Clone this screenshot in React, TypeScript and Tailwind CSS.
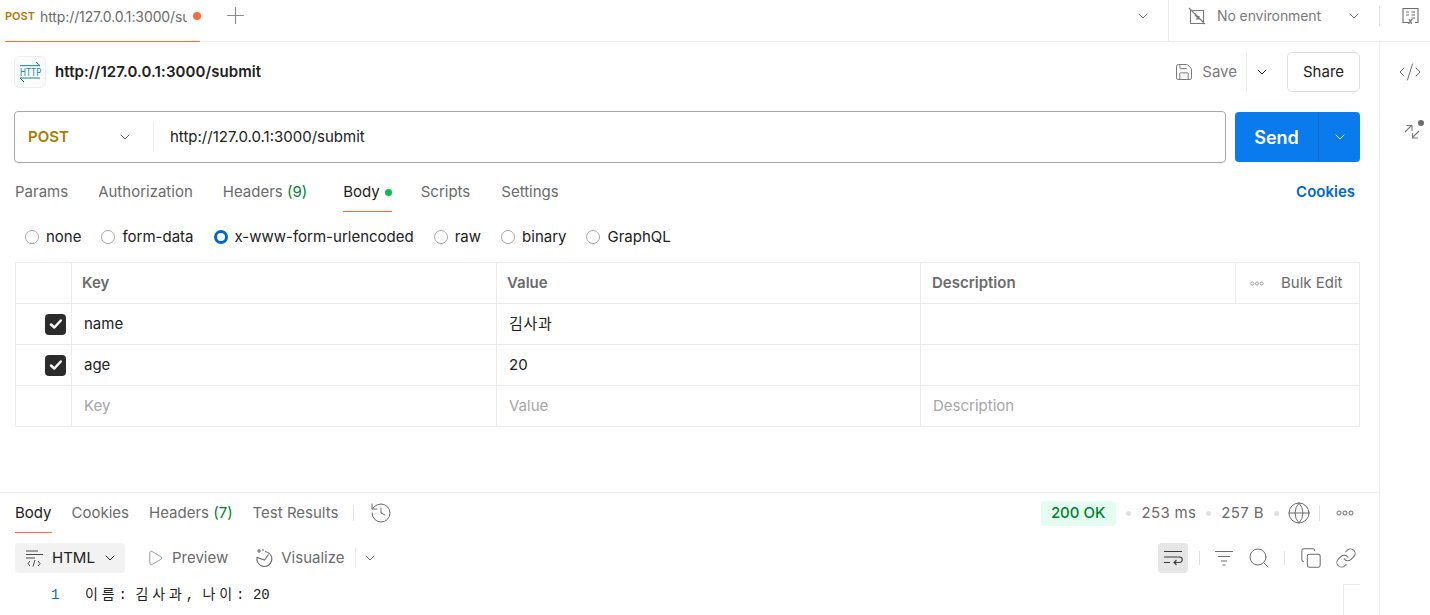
import { ChevronDown, CodeXml, Copy, Globe, History, Link, Play, Plus, Save, Search } from "lucide-react";

const RADIOS = ["none", "form-data", "x-www-form-urlencoded", "raw", "binary", "GraphQL"];

function Dots({ className }: { className?: string }) {
  return (
    <svg viewBox="0 0 18 6" className={className} fill="none" stroke="currentColor" strokeWidth="1">
      <circle cx="3" cy="3" r="2" />
      <circle cx="9" cy="3" r="2" />
      <circle cx="15" cy="3" r="2" />
    </svg>
  );
}

function HttpIcon() {
  return (
    <div className="w-8 h-8 rounded-md border border-[#ededed] bg-[#fbfbfb] flex items-center justify-center shrink-0">
      <svg viewBox="0 0 24 24" className="w-[24px] h-[24px]" fill="none" stroke="#0d8299" strokeWidth="1">
        <path d="M2 5.700h20M18 2l4 3.700" />
        <g transform="translate(2 16) scale(1 1.3)">
          <text x="0" y="0" fontSize="8" fill="#0d8299" stroke="none" fontFamily="Inter">HTTP</text>
        </g>
        <path d="M2 18h20M2 18l4 4" />
      </svg>
    </div>
  );
}

function Cell({ children, className }: { children?: React.ReactNode; className?: string }) {
  return <div className={"border-r border-b border-[#ededed] flex items-center " + (className ?? "")}>{children}</div>;
}

function Check() {
  return (
    <div className="w-[21px] h-[21px] rounded-[4px] bg-[#2b2b2b] flex items-center justify-center">
      <svg viewBox="0 0 16 16" className="w-4 h-4" fill="none" stroke="#fff" strokeWidth="2.500" strokeLinecap="round" strokeLinejoin="round">
        <path d="M3 8.500l3.300 3 6.500-7" />
      </svg>
    </div>
  );
}

function Row({ k, v, d, muted, check }: { k: string; v: React.ReactNode; d?: string; muted?: boolean; check?: boolean }) {
  const tone = muted ? "text-[#a6a6a6]" : "text-[#212121] pt-px";
  return (
    <div className="grid grid-cols-[56px_425px_424px_439px] h-[41px]">
      <Cell className="justify-end pr-[5px]">{check && <Check />}</Cell>
      <Cell className={"pl-3 " + tone}>{k}</Cell>
      <Cell className={"pl-3 " + tone}>{v}</Cell>
      <Cell className={"pl-3 " + tone}>{d}</Cell>
    </div>
  );
}

export default function App() {
  return (
    <div className="w-[1430px] h-[615px] overflow-hidden bg-white flex flex-col text-[15px] text-[#6b6b6b] font-['Inter','Noto_Sans_CJK_KR',sans-serif]">
      {/* tab strip */}
      <div className="h-[42px] shrink-0 border-b border-[#ededed] flex items-center">
        <div className="relative w-[200px] h-[42px] ml-[5px] -mr-[5px] shrink-0 flex items-center pb-[10px] mt-[1px]">
          <span className="text-[11px] font-semibold text-[#ad7a03] w-[35px]">POST</span>
          <span className="text-[14px] text-[#6b6b6b] w-[147px] overflow-hidden whitespace-nowrap tracking-[-0.1px]">http://127.0.0.1:3000/submit</span>
          <span className="w-2 h-2 rounded-full bg-[#ff6c37] ml-[6px]" />
          <span className="absolute left-0 right-[5px] bottom-0 h-px bg-[#ff6c37]" />
        </div>
        <Plus className="w-[27px] h-[27px] ml-[22px] mb-[10px] text-[#8a8a8a]" strokeWidth={1} />
        <div className="flex-1" />
        <ChevronDown className="w-4 h-4 mr-[17px] mb-[10px]" strokeWidth={1.5} />
        <div className="h-[41px] w-[262px] border-l border-[#ededed] flex items-center pb-[10px]">
          <svg viewBox="0 0 18 18" className="w-[18px] h-[18px] ml-[19px]" fill="none" stroke="#7a7a7a" strokeWidth="1.1">
            <path d="M2.500 3.500v13h13v-13zM1 1l16 16M7 8l4 4M8 12h3V9" />
          </svg>
          <span className="ml-[11px] w-[104px] text-[14px] text-[#7a7a7a] tracking-[-0.1px] whitespace-nowrap">No environment</span>
          <ChevronDown className="w-4 h-4 ml-[25px]" strokeWidth={1.5} />
          <div className="h-[20px] w-px bg-[#e0e0e0] ml-[17px]" />
          <svg viewBox="0 0 18 18" className="w-[18px] h-[18px] ml-[21px]" fill="none" stroke="#6b6b6b" strokeWidth="1.1">
            <path d="M8 15.500H2v-14h15v14h-3M5 5h3M10.500 5h3.500M10.500 8h3.500M10.500 11h3.500M5 8h3" />
            <text x="7" y="17" fontSize="8" fontWeight="700" fontStyle="italic" fill="#6b6b6b" stroke="none">x</text>
          </svg>
        </div>
      </div>

      <div className="flex-1 flex min-h-0">
        <div className="w-[1380px] shrink-0 border-r border-[#ededed] flex flex-col">
          {/* request header */}
          <div className="h-[60px] shrink-0 pl-[14px] pr-[19px] flex items-center">
            <HttpIcon />
            <span className="ml-[9px] mt-px font-semibold text-[#212121] tracking-[0.08px]">http://127.0.0.1:3000/submit</span>
            <div className="flex-1" />
            <Save className="w-[20px] h-[20px] text-[#7a7a7a]" strokeWidth={1.2} />
            <span className="ml-[8px] text-[#7a7a7a]">Save</span>
            <div className="ml-[9px] h-[40px] w-px bg-[#ededed]" />
            <ChevronDown className="w-4 h-4 ml-[7px] text-[#212121]" strokeWidth={1.5} />
            <button className="ml-[17px] w-[73px] h-[40px] rounded-[5px] border border-[#e0e0e0] text-[#212121]">Share</button>
          </div>

          {/* url bar */}
          <div className="h-[62px] shrink-0 pl-[14px] pr-[19px] pt-[9px] flex items-start">
            <div className="w-[1212px] h-[52px] rounded-[4px] border border-[#a6a6a6] flex items-center">
              <div className="w-[139px] h-[30px] border-r border-[#ededed] flex items-center pl-[13px]">
                <span className="mt-px font-semibold text-[#ad7a03]">POST</span>
                <ChevronDown className="w-4 h-4 ml-[48px]" strokeWidth={1.5} />
              </div>
              <span className="ml-[16px] text-[#212121]">http://127.0.0.1:3000/submit</span>
            </div>
            <div className="ml-[9px] w-[125px] h-[50px] mt-px rounded-[4px] bg-[#097bed] flex text-white">
              <span className="w-[84px] pt-px border-r border-[#0a6fd3] flex items-center justify-center text-[18px] font-semibold">Send</span>
              <span className="flex-1 flex items-center justify-center">
                <ChevronDown className="w-4 h-4" strokeWidth={1.5} />
              </span>
            </div>
          </div>

          {/* request tabs */}
          <div className="h-[56px] shrink-0 pl-[15px] pr-[24px] flex items-start pt-[18px]">
            <span className="leading-[20px]">Params</span>
            <span className="ml-[30px] leading-[20px]">Authorization</span>
            <span className="ml-[30px] leading-[20px]">
              Headers <span className="text-[#007f31]">(9)</span>
            </span>
            <div className="relative ml-[36px] h-[30px] leading-[20px] text-[#212121] flex items-start">
              Body
              <span className="w-[7px] h-[7px] rounded-full bg-[#0cbb52] ml-[5px] mt-[7px]" />
              <span className="absolute left-0 right-0 bottom-0 h-px bg-[#ff6c37]" />
            </div>
            <span className="ml-[29px] leading-[20px]">Scripts</span>
            <span className="ml-[31px] leading-[20px]">Settings</span>
            <div className="flex-1" />
            <span className="leading-[20px] font-semibold text-[#0265d2]">Cookies</span>
          </div>

          {/* body types */}
          <div className="h-[42px] shrink-0 pl-[25px] flex items-start pt-[7px] gap-[20px]">
            {RADIOS.map((r) => {
              const on = r === "x-www-form-urlencoded";
              return (
                <div key={r} className="flex items-center h-[20px] gap-[7px] text-[#212121]">
                  <span className={on ? "w-[14px] h-[14px] rounded-full border-[3.500px] border-[#0265d2]" : "w-[14px] h-[14px] rounded-full border border-[#a6a6a6]"} />
                  {r}
                </div>
              );
            })}
          </div>

          {/* params table */}
          <div className="ml-[15px] w-[1345px] border-t border-l border-[#ededed] shrink-0">
            <div className="grid grid-cols-[56px_425px_424px_315px_124px] h-[41px] font-semibold text-[#6b6b6b]">
              <Cell />
              <Cell className="pl-[10px] pt-px">Key</Cell>
              <Cell className="pl-[10px] pt-px">Value</Cell>
              <Cell className="pl-[11px] pt-px">Description</Cell>
              <Cell className="pl-[14px] font-normal">
                <Dots className="w-[14px] h-[5px] text-[#8a8a8a]" />
                <span className="ml-[17px] whitespace-nowrap">Bulk Edit</span>
              </Cell>
            </div>
            <Row k="name" v={<span className="tracking-[0.7px]">김사과</span>} check />
            <Row k="age" v="20" check />
            <Row k="Key" v="Value" d="Description" muted />
          </div>

          <div className="flex-1" />

          {/* response */}
          <div className="h-[123px] shrink-0 border-t border-[#ededed] flex flex-col">
            <div className="h-[42px] shrink-0 pl-[15px] pr-[25px] flex items-start pt-[10px]">
              <div className="relative h-[30px] leading-[20px] text-[#212121]">
                Body
                <span className="absolute left-0 right-0 bottom-0 h-px bg-[#ff6c37]" />
              </div>
              <span className="ml-[20px] leading-[20px]">Cookies</span>
              <span className="ml-[20px] leading-[20px]">
                Headers <span className="text-[#007f31]">(7)</span>
              </span>
              <span className="ml-[20px] leading-[20px]">Test Results</span>
              <div className="ml-[15px] mt-[2px] h-[16px] w-px bg-[#e0e0e0]" />
              <History className="ml-[15px] -mt-[2px] w-6 h-6" strokeWidth={1} />
              <div className="flex-1" />
              <span className="-mt-[2px] w-[75px] h-[25px] rounded-[4px] bg-[#e5fcf0] text-[#007f31] font-medium flex items-center justify-center">200 OK</span>
              <span className="ml-[10px] w-[5px] h-[5px] mt-[8px] rounded-full bg-[#e0e0e0]" />
              <span className="ml-[11px] leading-[20px] tracking-[0.3px]">253 ms</span>
              <span className="ml-[10px] w-[5px] h-[5px] mt-[8px] rounded-full bg-[#e0e0e0]" />
              <span className="ml-[10px] leading-[20px] tracking-[0.4px]">257 B</span>
              <span className="ml-[10px] w-[5px] h-[5px] mt-[8px] rounded-full bg-[#e0e0e0]" />
              <Globe className="ml-[8px] -mt-[2px] w-6 h-6" strokeWidth={1} />
              <div className="ml-[8px] mt-[2px] h-[16px] w-px bg-[#e0e0e0]" />
              <Dots className="ml-[16px] mt-[7px] w-[18px] h-[6px] text-[#6b6b6b]" />
            </div>

            <div className="h-[46px] shrink-0 pl-[15px] pr-[22px] flex items-center pt-[8px] pb-[8px]">
              <div className="w-[110px] h-[30px] rounded-[4px] bg-[#f2f2f2] flex items-center pl-[10px] text-[#212121]">
                <svg viewBox="0 0 18 18" className="w-[18px] h-[18px]" fill="none" stroke="#4a4a4a" strokeWidth="1">
                  <path d="M1 2h12M1 5.500h17M1 9h9M5 12l-2 2.500 2 2.500M13 12l2 2.500-2 2.500M10 11l-2 6.500" />
                </svg>
                <span className="ml-[9px] pt-px">HTML</span>
                <ChevronDown className="w-4 h-4 ml-[7px]" strokeWidth={1.5} />
              </div>
              <Play className="ml-[21px] w-[18px] h-[18px] text-[#7a7a7a]" strokeWidth={1} />
              <span className="ml-[8px] pt-px">Preview</span>
              <svg viewBox="0 0 20 20" className="ml-[26px] w-5 h-5" fill="none" stroke="#6b6b6b" strokeWidth="1.1">
                <path d="M11 3.500a7.500 7.500 0 1 1-8 6l7.500 2.500 4-5.500M5 1v4M3 3h4M9 1v2" />
              </svg>
              <span className="ml-[7px] pt-px">Visualize</span>
              <div className="ml-[10px] h-[20px] w-px bg-[#ededed]" />
              <ChevronDown className="w-4 h-4 ml-[6px]" strokeWidth={1.5} />
              <div className="flex-1" />
              <div className="w-[30px] h-[30px] rounded-[4px] bg-[#e6e6e6] flex items-center justify-center">
                <svg viewBox="0 0 20 20" className="w-5 h-5" fill="none" stroke="#3a3a3a" strokeWidth="1.1">
                  <path d="M1 3.500h18M1 9h15.500a2.700 2.700 0 0 1 0 5.500H11M13.500 12L11 14.500l2.500 2.500M1 14.500h6" />
                </svg>
              </div>
              <div className="ml-[11px] h-[14px] w-px bg-[#e0e0e0]" />
              <svg viewBox="0 0 20 20" className="ml-[14px] w-5 h-5" fill="none" stroke="#6b6b6b" strokeWidth="1.1">
                <path d="M1 3.500h18M4 8.500h12M7 13h6M8.500 17h3" />
              </svg>
              <Search className="ml-[13px] w-6 h-6" strokeWidth={1} />
              <div className="ml-[13px] h-[14px] w-px bg-[#e0e0e0]" />
              <Copy className="ml-[15px] w-[22px] h-[22px]" strokeWidth={1.1} />
              <Link className="ml-[13px] w-[22px] h-[22px]" strokeWidth={1.1} />
            </div>

            <div className="relative flex-1 pt-[4px] pl-[51px] font-['Liberation_Mono','Noto_Sans_CJK_KR',monospace] text-[14px] text-[#212121] flex leading-[20px] whitespace-pre">
              <span className="w-[34px] text-[#0265d2]">1</span>
              <span>
                <span className="tracking-[3.900px]">이름</span>: <span className="tracking-[3.900px]">김사과</span>, <span className="tracking-[3.900px]">나이</span>: 20
              </span>
              <span className="absolute right-[19px] top-[3px] w-[17px] h-[40px] border-l border-t border-[#ededed]" />
            </div>
          </div>
        </div>

        {/* right rail */}
        <div className="flex-1 flex flex-col items-start pl-[18px] pt-[18px]">
          <CodeXml className="w-6 h-6" strokeWidth={1} />
          <div className="relative mt-[39px] ml-[5px]">
            <svg viewBox="0 0 18 18" className="w-[18px] h-[18px]" fill="none" stroke="#7a7a7a" strokeWidth="1.1">
              <path d="M2 9l6-6M3.500 2.500H9V8M16 8l-6 6M15 15H9.500V10" />
            </svg>
            <span className="absolute -right-[3px] -top-[3px] w-[6px] h-[6px] rounded-full bg-[#6b6b6b]" />
          </div>
        </div>
      </div>
    </div>
  );
}
